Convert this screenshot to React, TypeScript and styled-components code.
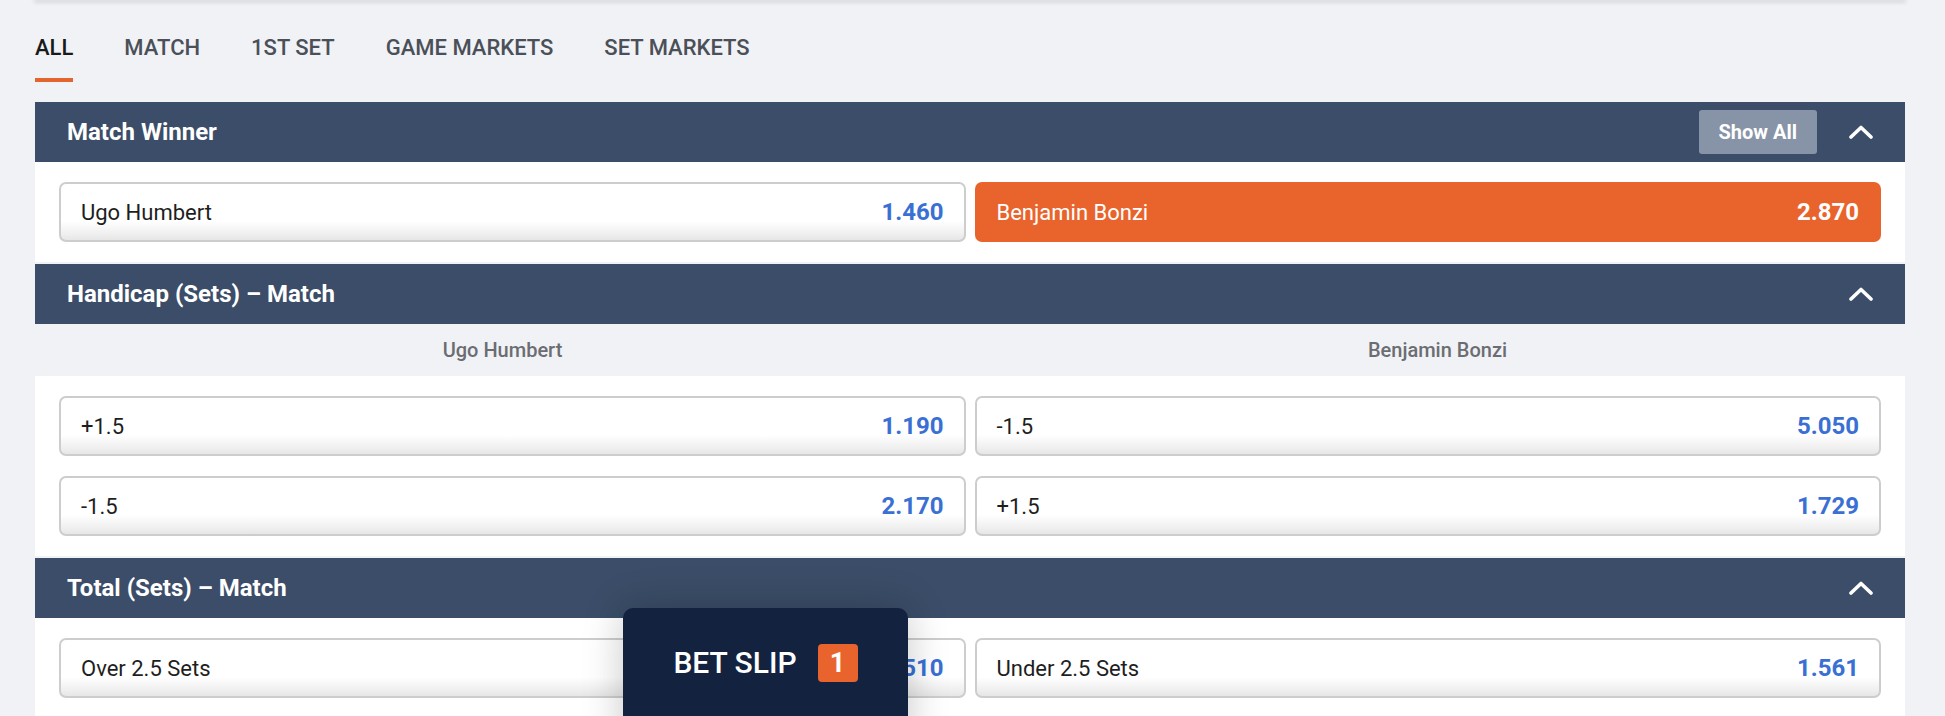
import React from "react";
import styled, { createGlobalStyle } from "styled-components";

const Global = createGlobalStyle`
  html, body {
    margin: 0;
    padding: 0;
    overflow: hidden;
    background: #f1f2f6;
    font-family: Roboto, "Liberation Sans", Arial, sans-serif;
  }
  * { box-sizing: border-box; }
`;

const Page = styled.div`
  position: relative;
  height: 716px;
  padding: 0 40px 0 35px;
`;

const TopCard = styled.div`
  height: 0;
  background: #fff;
  box-shadow: 0 1px 4px 1px rgba(0, 0, 0, 0.2);
`;

const Tabs = styled.nav`
  display: flex;
  gap: 51px;
  padding-top: 35px;
  margin-bottom: 20px;
`;

const Tab = styled.div<{ $active?: boolean }>`
  font-size: 22px;
  line-height: 26px;
  font-weight: 500;
  color: ${(p) => (p.$active ? "#1a1a1a" : "#4b5058")};
  padding-bottom: 17px;
  border-bottom: 4px solid ${(p) => (p.$active ? "#e2642f" : "transparent")};
  text-transform: uppercase;
`;

const Section = styled.section`
  margin-bottom: 2px;
`;

const Header = styled.div`
  height: 60px;
  background: #3b4d68;
  display: flex;
  align-items: center;
  padding: 0 32px;
`;

const Title = styled.h2`
  margin: 0;
  flex: 1;
  font-size: 24px;
  font-weight: 700;
  color: #fff;
`;

const ShowAll = styled.button`
  height: 44px;
  padding: 0 20px;
  border: none;
  border-radius: 3px;
  background: #8793a7;
  color: #fff;
  font-family: inherit;
  font-size: 20px;
  font-weight: 700;
  margin-right: 32px;
`;

const Chevron = styled.svg`
  display: block;
  width: 24px;
  height: 14px;
`;

const SubHeader = styled.div`
  display: grid;
  grid-template-columns: 1fr 1fr;
  height: 52px;
  align-items: center;
  text-align: center;
  font-size: 20px;
  font-weight: 500;
  color: #6b6d72;
`;

const Body = styled.div`
  background: #fff;
  padding: 20px 24px;
  display: grid;
  grid-template-columns: 1fr 1fr;
  column-gap: 9px;
  row-gap: 20px;
`;

const Odd = styled.button<{ $selected?: boolean }>`
  height: 60px;
  display: flex;
  align-items: center;
  justify-content: space-between;
  padding: 0 20px;
  border-radius: 7px;
  font-family: inherit;
  border: 2px solid ${(p) => (p.$selected ? "#e9642c" : "#cdcdcd")};
  background: ${(p) =>
    p.$selected
      ? "#e9642c"
      : "linear-gradient(to bottom, #ffffff 0%, #ffffff 66%, #f0f0f0 88%, #e6e6e6 100%)"};
  color: ${(p) => (p.$selected ? "#fff" : "#1e1e1e")};
`;

const Label = styled.span`
  font-size: 22px;
  font-weight: 400;
`;

const Price = styled.span<{ $selected?: boolean }>`
  font-size: 24px;
  font-weight: 700;
  color: ${(p) => (p.$selected ? "#fff" : "#3a6fd3")};
`;

const BetSlip = styled.div`
  position: absolute;
  left: 623px;
  top: 608px;
  width: 285px;
  height: 160px;
  background: #13223f;
  border-radius: 10px 10px 0 0;
  box-shadow: 0 0 40px rgba(0, 0, 0, 0.22);
  display: flex;
  justify-content: center;
  align-items: flex-start;
  padding-top: 36px;
  gap: 21px;
`;

const SlipText = styled.span`
  font-size: 30px;
  line-height: 38px;
  font-weight: 500;
  color: #fff;
`;

const Badge = styled.span`
  width: 40px;
  height: 38px;
  border-radius: 4px;
  background: #e9642c;
  color: #fff;
  font-size: 27px;
  font-weight: 700;
  display: flex;
  align-items: center;
  justify-content: center;
`;

const Up = () => (
  <Chevron viewBox="0 0 24 14">
    <path d="M2 12 L12 2.5 L22 12" fill="none" stroke="#fff" strokeWidth="3.6" strokeLinecap="round" strokeLinejoin="round" />
  </Chevron>
);

type Sel = { label: string; price: string; selected?: boolean };

const Market = ({
  title,
  showAll,
  columns,
  items,
}: {
  title: string;
  showAll?: boolean;
  columns?: [string, string];
  items: Sel[];
}) => (
  <Section>
    <Header>
      <Title>{title}</Title>
      {showAll && <ShowAll>Show All</ShowAll>}
      <Up />
    </Header>
    {columns && (
      <SubHeader>
        <span>{columns[0]}</span>
        <span>{columns[1]}</span>
      </SubHeader>
    )}
    <Body>
      {items.map((it, i) => (
        <Odd key={i} $selected={it.selected}>
          <Label>{it.label}</Label>
          <Price $selected={it.selected}>{it.price}</Price>
        </Odd>
      ))}
    </Body>
  </Section>
);

export default function App() {
  return (
    <>
      <Global />
      <Page>
        <TopCard />
        <Tabs>
          <Tab $active>All</Tab>
          <Tab>Match</Tab>
          <Tab>1st Set</Tab>
          <Tab>Game Markets</Tab>
          <Tab>Set Markets</Tab>
        </Tabs>
        <Market
          title="Match Winner"
          showAll
          items={[
            { label: "Ugo Humbert", price: "1.460" },
            { label: "Benjamin Bonzi", price: "2.870", selected: true },
          ]}
        />
        <Market
          title="Handicap (Sets) – Match"
          columns={["Ugo Humbert", "Benjamin Bonzi"]}
          items={[
            { label: "+1.5", price: "1.190" },
            { label: "-1.5", price: "5.050" },
            { label: "-1.5", price: "2.170" },
            { label: "+1.5", price: "1.729" },
          ]}
        />
        <Market
          title="Total (Sets) – Match"
          items={[
            { label: "Over 2.5 Sets", price: "1.510" },
            { label: "Under 2.5 Sets", price: "1.561" },
          ]}
        />
        <BetSlip>
          <SlipText>BET SLIP</SlipText>
          <Badge>1</Badge>
        </BetSlip>
      </Page>
    </>
  );
}
